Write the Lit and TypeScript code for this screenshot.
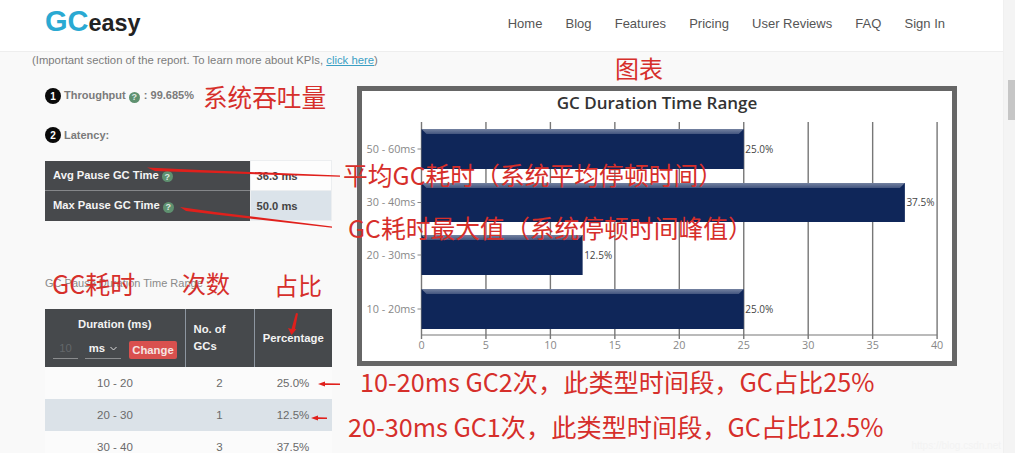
import { LitElement, html, css, svg } from "lit";
import { customElement } from "lit/decorators.js";

const OX = 362, OY = 91;
const X0 = 421.5 - OX, UNIT = 12.89;
const bars = [
  { label: "50 - 60ms", v: 25, t: 129 - OY, b: 169 - OY, txt: "25.0%" },
  { label: "30 - 40ms", v: 37.5, t: 183 - OY, b: 222 - OY, txt: "37.5%" },
  { label: "20 - 30ms", v: 12.5, t: 235 - OY, b: 275 - OY, txt: "12.5%" },
  { label: "10 - 20ms", v: 25, t: 289 - OY, b: 329 - OY, txt: "25.0%" },
];
const ticks = [0, 5, 10, 15, 20, 25, 30, 35, 40];
const AXIS = 335 - OY, GTOP = 122 - OY;

const notes = [
  { x: 615, y: 68, s: 24, t: "图表" },
  { x: 203, y: 96, s: 24.6, t: "系统吞吐量" },
  { x: 343, y: 174, s: 24.8, t: "平均GC耗时（系统平均停顿时间）" },
  { x: 348, y: 227, s: 24.8, t: "GC耗时最大值（系统停顿时间峰值）" },
  { x: 52, y: 283, s: 25, t: "GC耗时" },
  { x: 182, y: 283, s: 24, t: "次数" },
  { x: 274, y: 285, s: 24, t: "占比" },
  { x: 360, y: 381, s: 25.2, t: "10-20ms GC2次，此类型时间段，GC占比25%" },
  { x: 348, y: 426, s: 25.2, t: "20-30ms GC1次，此类型时间段，GC占比12.5%" },
];

const rows = [
  ["10 - 20", "2", "25.0%"],
  ["20 - 30", "1", "12.5%"],
  ["30 - 40", "3", "37.5%"],
];

@customElement("app-root")
export class AppRoot extends LitElement {
  static styles = css`
    :host { display: block; position: relative; width: 1015px; height: 453px; overflow: hidden; background: #f9f9f9; font-family: "Liberation Sans", Arial, sans-serif; }
    .shell { display: flex; height: 453px; }
    .page { flex: 1; min-width: 0; }
    .scroll { width: 12px; background: #f4f4f4; border-left: 1px solid #f0f0f0; box-sizing: border-box; }
    .thumb { width: 7px; height: 40px; margin: 80px 0 0 4px; background: #c6c6c6; }
    header { height: 52px; box-sizing: border-box; background: #fff; border-bottom: 1px solid #eee; display: flex; align-items: center; padding: 0 58px 5px 45px; justify-content: space-between; }
    .logo { font-weight: 700; font-size: 23.4px; color: #222; line-height: 40px; margin-top: -2px; }
    .logo b { font-size: 29px; color: #2aa9d2; }
    nav { display: flex; gap: 23.15px; font-size: 13px; color: #555; }
    .note { margin: 0 0 0 32px; font-size: 11.3px; line-height: 16px; color: #7c7c7c; }
    .note a { color: #3a9fc4; text-decoration: underline; }
    .cols { display: flex; padding-left: 45px; }
    .left { width: 287px; flex: none; }
    .kpi { display: flex; align-items: center; gap: 3px; height: 20px; font-size: 11px; font-weight: 700; color: #7b7b7b; }
    .kpi.first { margin-top: 18px; }
    .kpi.second { margin-top: 19px; }
    .num { width: 16px; height: 16px; border-radius: 50%; background: #0a0a0a; color: #fff; font-size: 10px; display: flex; align-items: center; justify-content: center; }
    .help { display: inline-flex; width: 11px; height: 11px; border-radius: 50%; background: #5f9170; color: #dfe9e2; font-size: 9px; font-weight: 700; align-items: center; justify-content: center; margin: 0 1px 0 0; vertical-align: -1px; }
    table { border-collapse: collapse; table-layout: fixed; width: 287px; font-size: 11px; }
    .lat { margin-top: 15px; font-size: 11.2px; }
    .lat th { background: #47494c; color: #f4f4f4; text-align: left; padding: 0 0 0 8px; height: 30px; font-weight: 700; box-sizing: border-box; }
    .lat tr + tr th { border-top: 1px solid #85878a; }
    .lat td { padding: 0 0 0 6px; color: #444; font-weight: 700; border: 1px solid #eceef0; }
    .lat .w { background: #fdfdfd; }
    .lat .g { background: #dbe3ea; }
    .cap { margin-top: 54px; height: 16px; line-height: 16px; font-size: 11px; color: #8a8a8a; }
    .dur { margin-top: 18px; font-size: 11.3px; }
    .dur th { background: #46494c; color: #f3f3f3; font-weight: 700; height: 58px; padding: 0; border-left: 1px solid #8d96a0; box-sizing: border-box; line-height: 17px; }
    .dur th:first-child { border-left: 0; padding-top: 2px; }
    .dur th.l { text-align: left; padding-left: 8px; }
    .durT { margin-bottom: 4px; margin-top: -4px; }
    .ctl { display: flex; align-items: flex-end; padding-left: 8px; height: 22px; }
    .in { width: 25px; height: 20px; line-height: 18px; border-bottom: 1px solid #8a8c8e; box-sizing: border-box; color: #63676a; text-align: center; font-weight: 400; margin-right: 7px; }
    .sel { width: 36px; height: 20px; line-height: 18px; border-bottom: 1px solid #8a8c8e; box-sizing: border-box; display: flex; gap: 5px; align-items: center; justify-content: center; margin-right: 8px; }
    .btn { width: 48px; height: 18px; line-height: 18px; background: #d9504e; border-radius: 2px; color: #f6e4e2; text-align: center; }
    .dur td { height: 32px; text-align: center; color: #6a6a6a; padding: 0; box-sizing: border-box; font-size: 11.5px; }
    .dur tr.w td { background: #fbfbfb; }
    .dur tr.g td { background: #dbe2e8; }
    .frame { margin: 18px 0 0 25px; width: 600px; height: 280px; border: 5px solid #666; box-sizing: border-box; background: #fff; flex: none; }
    .frame svg { display: block; }
    .ov { position: absolute; inset: 0; pointer-events: none; }
    .an { position: absolute; font-family: "Noto Sans CJK SC", "Liberation Sans", sans-serif; line-height: 30px; margin-top: -15px; white-space: nowrap; color: #d62f2b; }
    .ov svg { position: absolute; inset: 0; }
    .wm { position: absolute; right: 14px; bottom: 2px; font-size: 10px; color: #f3f3f3; }
  `;

  help() { return html`<span class="help">?</span>`; }

  chart() {
    return html`<svg width="590" height="270" viewBox="0 0 590 270">
      <defs><linearGradient id="bev" x1="0" y1="0" x2="0" y2="1"><stop offset="0" stop-color="#7482a0"/><stop offset="1" stop-color="#43557f"/></linearGradient></defs>
      <text x="295" y="18" text-anchor="middle" font-family="Open Sans" font-weight="600" font-size="17" fill="#333">GC Duration Time Range</text>
      ${ticks.map((t) => {
        const x = X0 + t * UNIT;
        return svg`<line x1=${x} x2=${x} y1=${GTOP} y2=${AXIS + 4} stroke="#777" stroke-width="1.4"/>
          <text x=${x} y=${AXIS + 14} text-anchor="middle" font-family="Open Sans" font-size="10.8" fill="#888">${t}</text>`;
      })}
      <line x1=${X0} x2=${X0 + 40 * UNIT} y1=${AXIS} y2=${AXIS} stroke="#777" stroke-width="1.2"/>
      ${bars.map((b) => {
        const r = X0 + b.v * UNIT, m = (b.t + b.b) / 2;
        return svg`
          <line x1=${X0 - 4} x2=${X0} y1=${m} y2=${m} stroke="#888"/>
          <text x=${X0 - 6} y=${m + 3.5} text-anchor="end" font-family="Open Sans" font-size="10.8" fill="#888">${b.label}</text>
          <rect x=${X0} y=${b.t} width=${r - X0} height=${b.b - b.t} fill="#0f2659"/>
          <polygon points="${X0},${b.t} ${r},${b.t} ${r - 5},${b.t + 5} ${X0 + 5},${b.t + 5}" fill="url(#bev)"/>
          <text x=${r + 1.5} y=${m + 3.5} font-family="Open Sans" font-size="10" fill="#444">${b.txt}</text>`;
      })}
    </svg>`;
  }

  render() {
    return html`
      <div class="shell">
        <div class="page">
          <header>
            <div class="logo"><b>GC</b>easy</div>
            <nav><span>Home</span><span>Blog</span><span>Features</span><span>Pricing</span><span>User Reviews</span><span>FAQ</span><span>Sign In</span></nav>
          </header>
          <p class="note">(Important section of the report. To learn more about KPIs, <a>click here</a>)</p>
          <div class="cols">
            <div class="left">
              <div class="kpi first"><span class="num">1</span><span>Throughput ${this.help()} : 99.685%</span></div>
              <div class="kpi second"><span class="num">2</span><span>Latency:</span></div>
              <table class="lat">
                <colgroup><col style="width:205px" /><col /></colgroup>
                <tr><th>Avg Pause GC Time ${this.help()}</th><td class="w">36.3 ms</td></tr>
                <tr><th>Max Pause GC Time ${this.help()}</th><td class="g">50.0 ms</td></tr>
              </table>
              <div class="cap">GC Pause Duration Time Range :</div>
              <table class="dur">
                <colgroup><col style="width:140px" /><col style="width:69px" /><col /></colgroup>
                <tr>
                  <th>
                    <div class="durT">Duration (ms)</div>
                    <div class="ctl"><span class="in">10</span><span class="sel">ms <svg width="7" height="5" viewBox="0 0 7 5"><path d="M.5 1l3 3 3-3" fill="none" stroke="#ddd" stroke-width="1"/></svg></span><span class="btn">Change</span></div>
                  </th>
                  <th class="l">No. of<br />GCs</th>
                  <th>Percentage</th>
                </tr>
                ${rows.map((r, i) => html`<tr class=${i % 2 ? "g" : "w"}><td>${r[0]}</td><td>${r[1]}</td><td>${r[2]}</td></tr>`)}
              </table>
            </div>
            <div class="frame">${this.chart()}</div>
          </div>
        </div>
        <div class="scroll"><div class="thumb"></div></div>
      </div>
      <div class="ov">
        ${notes.map((n) => html`<div class="an" style="left:${n.x}px;top:${n.y}px;font-size:${n.s}px">${n.t}</div>`)}
        <svg width="1015" height="453" viewBox="0 0 1015 453">
          <g fill="#e0201c">
            <polygon points="147,167.5 200,170 340,175.4 340,176.8 200,172.6 155,171"/>
            <polygon points="180,207 215,212 332,226.4 332,227.8 215,214.6 186,211"/>
            <polygon points="296,313 298,313.4 295,329 296.5,329 291.5,335 288,328 291.5,329"/>
            <polygon points="318,384 325,381.5 325,383.3 340,383.5 340,385 325,385 325,386.5"/>
            <polygon points="311,418 318,415.5 318,417.3 327,417.5 327,419 318,419 318,420.5"/>
          </g>
        </svg>
        <div class="wm">https://blog.csdn.net</div>
      </div>
    `;
  }
}
